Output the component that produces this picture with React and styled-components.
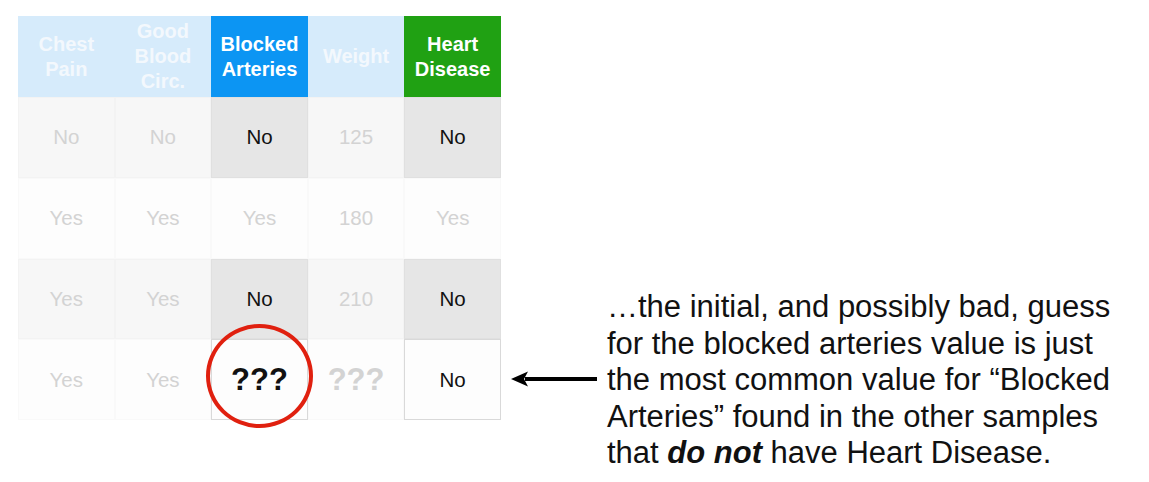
import React from 'react'
import styled, { createGlobalStyle } from 'styled-components'

const Global = createGlobalStyle`
  body {
    margin: 0;
    background: #fff;
    font-family: "Liberation Sans", Arial, sans-serif;
  }
`

const Page = styled.div`
  width: 1149px;
  height: 482px;
  display: flex;
  align-items: flex-start;
  padding: 16px 0 0 18px;
  box-sizing: border-box;
  overflow: hidden;
`

const Table = styled.div`
  display: grid;
  grid-template-columns: repeat(5, 96.6px);
  grid-template-rows: 81px repeat(4, 80.75px);
`

const headBg = { faded: '#d6ebfb', blue: '#0c95f3', green: '#20a113' }

const Head = styled.div`
  display: flex;
  align-items: center;
  justify-content: center;
  text-align: center;
  background: ${p => headBg[p.$kind]};
  color: ${p => (p.$kind === 'faded' ? '#f3f8fd' : '#fff')};
  font-weight: bold;
  font-size: 20px;
  line-height: 25px;
`

const Cell = styled.div`
  position: relative;
  display: flex;
  align-items: center;
  justify-content: center;
  box-sizing: border-box;
  background: ${p => (p.$hl ? '#e6e6e6' : p.$shade ? '#f7f7f7' : '#fdfdfd')};
  color: ${p => (p.$dark ? '#111' : '#d3d3d3')};
  border: 1px solid ${p => (p.$boxed ? '#d9d9d9' : p.$hl ? '#e0e0e0' : 'rgba(0,0,0,0.015)')};
  font-weight: ${p => (p.$big ? 'bold' : 'normal')};
  font-size: ${p => (p.$big ? '31px' : '20.5px')};
`

const Ring = styled.div`
  position: absolute;
  z-index: 2;
  left: -6px;
  top: -16px;
  width: 107px;
  height: 104px;
  box-sizing: border-box;
  border: 4px solid #e0200f;
  border-radius: 50%;
`

const Note = styled.div`
  display: flex;
  align-items: center;
  gap: 10px;
  margin: 273px 0 0 10px;
`

const Arrow = styled.svg`
  flex: none;
  margin-top: -2px;
`

const Text = styled.p`
  margin: 0;
  font-size: 31px;
  line-height: 36.5px;
  color: #111;
  white-space: nowrap;
`

const rows = [
  [
    { t: 'No', shade: true },
    { t: 'No', shade: true },
    { t: 'No', hl: true, dark: true },
    { t: '125', shade: true },
    { t: 'No', hl: true, dark: true },
  ],
  [{ t: 'Yes' }, { t: 'Yes' }, { t: 'Yes' }, { t: '180' }, { t: 'Yes' }],
  [
    { t: 'Yes', shade: true },
    { t: 'Yes', shade: true },
    { t: 'No', hl: true, dark: true },
    { t: '210', shade: true },
    { t: 'No', hl: true, dark: true },
  ],
  [
    { t: 'Yes' },
    { t: 'Yes' },
    { t: '???', dark: true, big: true, boxed: true, ring: true },
    { t: '???', big: true },
    { t: 'No', dark: true, boxed: true },
  ],
]

const heads = [
  { t: ['Chest', 'Pain'], k: 'faded' },
  { t: ['Good', 'Blood', 'Circ.'], k: 'faded' },
  { t: ['Blocked', 'Arteries'], k: 'blue' },
  { t: ['Weight'], k: 'faded' },
  { t: ['Heart', 'Disease'], k: 'green' },
]

export default function App() {
  return (
    <Page>
      <Global />
      <Table>
        {heads.map((h, i) => (
          <Head key={i} $kind={h.k}>
            <span>
              {h.t.map((w, j) => (
                <React.Fragment key={j}>
                  {j > 0 && <br />}
                  {w}
                </React.Fragment>
              ))}
            </span>
          </Head>
        ))}
        {rows.map((r, i) =>
          r.map((c, j) => (
            <Cell
              key={i + '-' + j}
              $shade={c.shade}
              $hl={c.hl}
              $dark={c.dark}
              $big={c.big}
              $boxed={c.boxed}
            >
              {c.t}
              {c.ring && <Ring />}
            </Cell>
          ))
        )}
      </Table>
      <Note>
        <Arrow width="86" height="20" viewBox="0 0 86 20">
          <line x1="14" y1="10" x2="86" y2="10" stroke="#000" strokeWidth="4" />
          <path d="M0 10 L17 2.5 L13 10 L17 17.5 Z" fill="#000" />
        </Arrow>
        <Text>
          …the initial, and possibly bad, guess
          <br />
          for the blocked arteries value is just
          <br />
          the most common value for “Blocked
          <br />
          Arteries” found in the other samples
          <br />
          that <b><i>do not</i></b> have Heart Disease.
        </Text>
      </Note>
    </Page>
  )
}
